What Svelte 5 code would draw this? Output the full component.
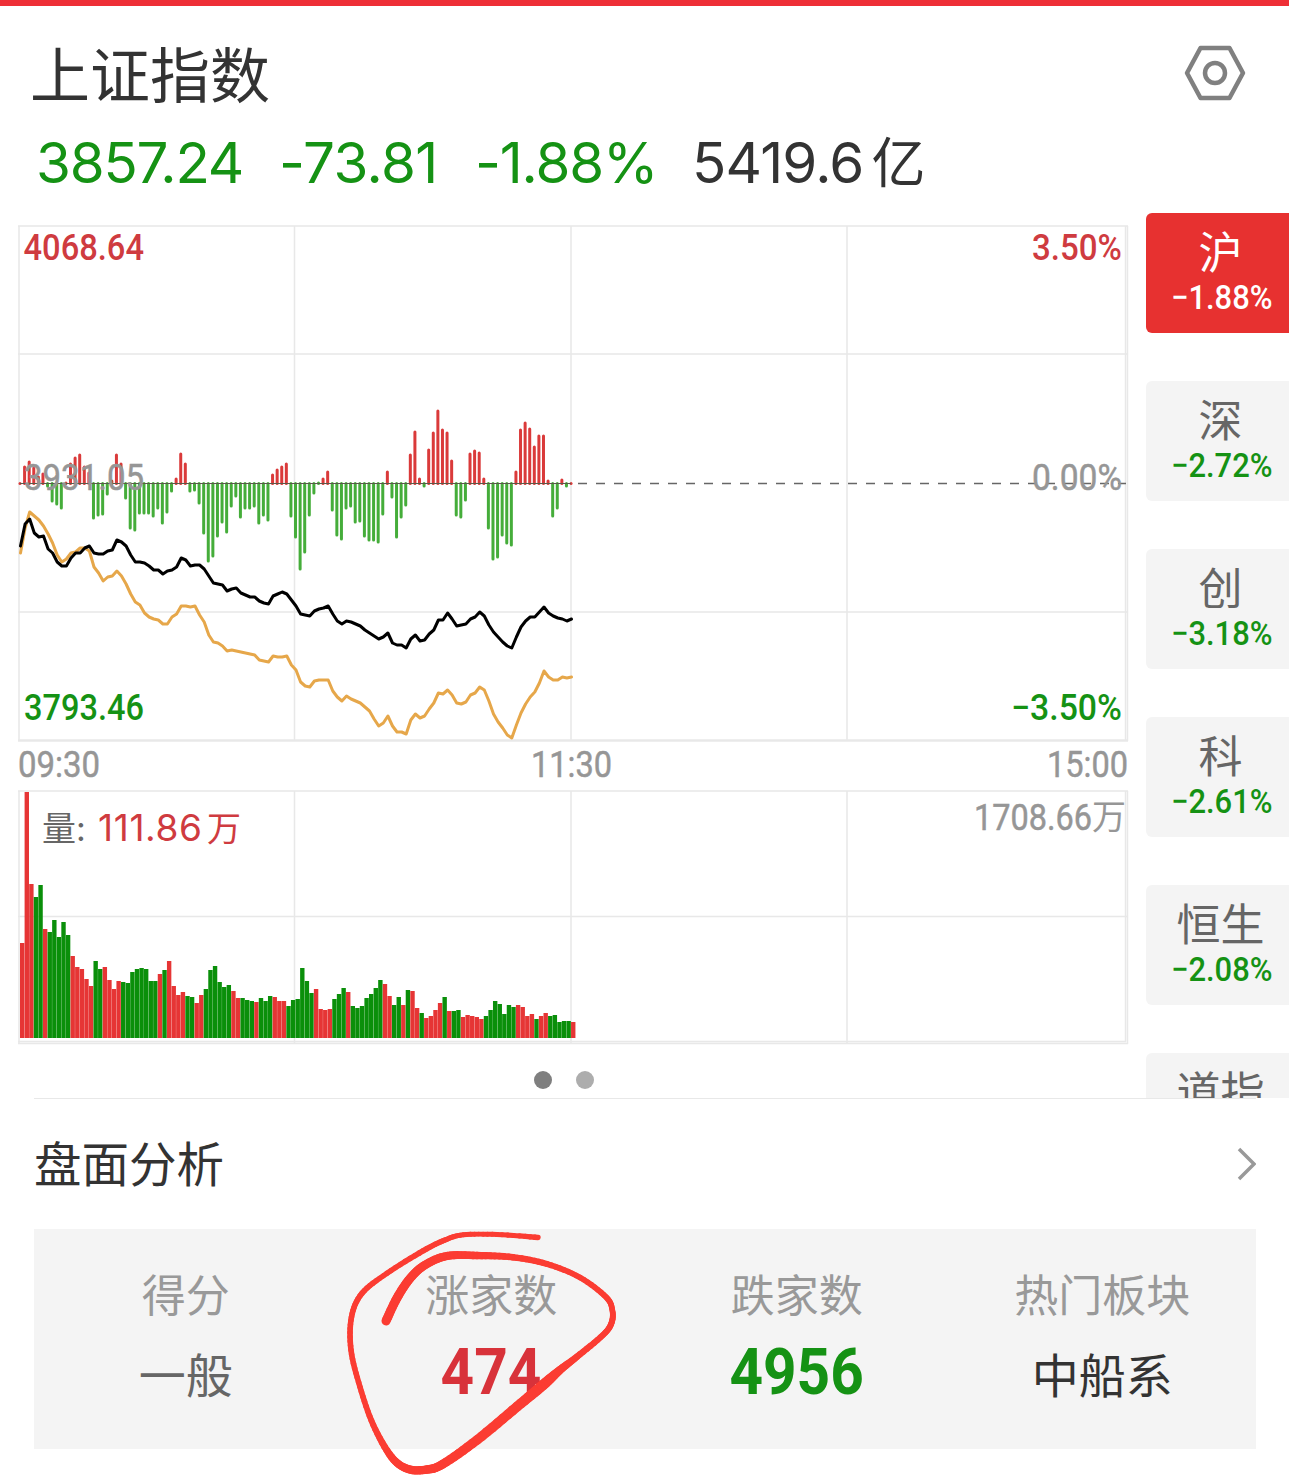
<script lang="ts">
  const STEP = 4.592;

  // Momentum bars: distance from the zero line, positive is up
  const momentum = [
    0, 17, 22, 16, 7, 10, -4, -19, -22, -26, 1, 20, 26, 29, 17, 11, -36, -33, -32, -12,
    3, 29, 20, -16, -46, -48, -31, -31, -31, -34, -26, -41, -30, -9, 5, 30, 20, -9, -8, -21,
    -51, -79, -74, -54, -40, -50, -24, -14, -35, -26, -26, -24, -41, -33, -38, 9, 14, 17, 20, -34,
    -55, -87, -70, -33, -11, -1, 5, 12, -28, -53, -57, -26, -24, -40, -39, -54, -58, -58, -60, -32,
    12, -15, -55, -35, -23, 29, 52, 5, -4, 34, 51, 73, 54, 51, 23, -33, -35, -18, 30, 33,
    31, 5, -46, -77, -75, -53, -61, -63, 12, 54, 61, 55, 37, 48, 48, 3, -34, -26, 4, -4,
    0,
  ];

  const price = [
    546, 524, 519, 533, 537, 536, 549, 553, 562, 566, 566, 558, 553, 553, 548, 546, 553, 554, 554, 551,
    550, 540, 542, 546, 555, 562, 562, 563, 566, 570, 570, 574, 571, 570, 567, 558, 560, 566, 565, 565,
    569, 576, 583, 584, 585, 591, 589, 588, 593, 595, 597, 597, 601, 603, 604, 596, 594, 592, 594, 600,
    606, 614, 615, 616, 611, 609, 608, 606, 614, 621, 624, 621, 622, 624, 626, 630, 633, 636, 639, 637,
    633, 643, 645, 645, 648, 639, 635, 641, 640, 634, 630, 620, 620, 613, 619, 626, 625, 624, 619, 617,
    612, 616, 625, 632, 637, 642, 646, 648, 637, 627, 621, 617, 617, 612, 607, 613, 616, 618, 619, 621,
    619,
  ];

  const average = [
    553, 528, 512, 516, 520, 526, 534, 543, 555, 562, 559, 553, 552, 548, 548, 551, 567, 573, 581, 577,
    576, 571, 576, 584, 594, 602, 605, 613, 617, 619, 620, 624, 624, 617, 614, 606, 606, 607, 606, 615,
    622, 635, 642, 643, 646, 651, 650, 651, 652, 653, 654, 655, 660, 661, 662, 656, 657, 657, 656, 665,
    670, 682, 686, 687, 681, 680, 680, 680, 691, 697, 701, 696, 699, 701, 703, 707, 711, 719, 726, 723,
    716, 726, 732, 732, 734, 720, 714, 718, 716, 709, 703, 693, 694, 690, 695, 703, 704, 702, 695, 693,
    687, 690, 701, 714, 722, 728, 735, 738, 725, 713, 704, 697, 692, 683, 671, 677, 680, 680, 677, 678,
    677,
  ];

  // Volume bars: height, negative marks a falling minute
  const volume = [
    95, 246, 154, -141, -153, 109, -106, -118, -101, -116, -103, 82, 71, 69, 59, 52, -77, -69, 71, 58,
    49, 57, -56, -55, -66, -69, -70, -69, -57, -57, 64, -68, 77, 52, 43, 46, -42, -41, 35, 43,
    -49, -68, -72, -56, -51, -53, 47, 40, -40, -38, -37, 36, -40, -37, -42, 41, 37, 37, -32, -38,
    -39, -70, -57, -45, 49, 29, 28, 29, -39, -44, -50, 46, -32, -30, -32, -40, -44, -50, -58, 54,
    42, -33, -41, 33, -48, 47, 30, -25, 20, 22, 28, 35, -41, 27, -27, -28, 21, 23, 22, 21,
    19, -22, -28, -37, -34, -24, -33, -31, 33, 31, 22, 24, -19, 22, 25, -22, -23, -16, -17, -17,
    16,
  ];

  const markets = [
    { name: "沪", change: "−1.88%" },
    { name: "深", change: "−2.72%" },
    { name: "创", change: "−3.18%" },
    { name: "科", change: "−2.61%" },
    { name: "恒生", change: "−2.08%" },
    { name: "道指", change: "" },
  ];

  const stats = [
    { label: "得分", value: "一般", kind: "plain" },
    { label: "涨家数", value: "474", kind: "up" },
    { label: "跌家数", value: "4956", kind: "down" },
    { label: "热门板块", value: "中船系", kind: "dark" },
  ];

  // Pen stroke: x, y, width
  const pen = [
    [386, 1321, 9], [397, 1298, 9], [410, 1278.5, 8.8], [425, 1265, 8.6], [447, 1256, 8.2],
    [477, 1255.5, 7.5], [513, 1257.3, 6.5], [547, 1264, 6], [580, 1277.5, 5.6], [606, 1297, 5.8],
    [612.3, 1310, 5.6], [611.5, 1323, 6], [603, 1335, 6], [577, 1356.7, 6.5], [560, 1370, 8],
    [543, 1385, 10.4], [517, 1406.7, 10], [477, 1440, 9.6], [443, 1464, 9], [427, 1469.5, 8.4],
    [408, 1469, 8.2], [391.5, 1457, 7.4], [373.3, 1425, 6], [360, 1387, 5.6], [351, 1350, 5.6],
    [351.5, 1317, 5.6], [362, 1293.3, 5.6], [387, 1273.3, 5.4], [423.3, 1250.7, 5.6], [445, 1240, 5.2],
    [463.3, 1234.8, 5], [497, 1234.5, 5], [538, 1237.5, 5.4],
  ];

  function toPoints(values: number[]): string {
    return values.map((y, i) => `${(20.5 + i * STEP).toFixed(1)},${y}`).join(" ");
  }

  function spline(a: number, b: number, c: number, d: number, t: number): number {
    return 0.5 * (2 * b + (c - a) * t + (2 * a - 5 * b + 4 * c - d) * t * t + (3 * b - a - 3 * c + d) * t * t * t);
  }

  function smooth(nodes: number[][]): number[][] {
    const out: number[][] = [];
    for (let i = 0; i < nodes.length - 1; i++) {
      const [a, b, c, d] = [nodes[Math.max(i - 1, 0)], nodes[i], nodes[i + 1], nodes[Math.min(i + 2, nodes.length - 1)]];
      for (let k = 0; k < 8; k++) {
        out.push([0, 1, 2].map((n) => spline(a[n], b[n], c[n], d[n], k / 8)));
      }
    }
    out.push(nodes[nodes.length - 1]);
    return out;
  }

  const stroke = smooth(pen);
</script>

{#snippet din(kind: string, x: number, y: number, width: number, value: string)}
  <text class="din {kind}" {x} {y} textLength={width} lengthAdjust="spacingAndGlyphs">{value}</text>
{/snippet}

<div class="page">
  <header>
    <div class="title-row">
      <h1>上证指数</h1>
      <svg class="settings" width="64" height="58" viewBox="0 0 64 58">
        <path d="M17.5 4H46.5L60 29L46.5 54H17.5L4 29Z" />
        <circle cx="32" cy="29" r="10" />
      </svg>
    </div>
    <div class="quote">
      <span class="q-price">3857.24</span>
      <span class="q-diff">-73.81</span>
      <span class="q-rate">-1.88%</span>
      <span class="q-amount">5419.6<i>亿</i></span>
    </div>
  </header>

  <div class="main">
    <div class="charts">
      <svg width="1146" height="845" viewBox="0 213 1146 845">
        <g class="grid">
          <path d="M18 226H1128M18 354H1127M18 612H1127M19 226V741M294.5 226V741M571 226V741M847 226V741M1125.5 226V741M1127.5 226V741" />
          <path class="edge" d="M18 740.5H1128" />
          <path d="M18 791H1128M18 916.5H1127M18 1041.5H1126M18 1043.5H1128M19 791V1044M294.5 791V1043M571 791V1043M847 791V1043M1125.5 791V1042M1127.5 791V1044" />
        </g>
        <path class="zero" d="M578 483.5H1126" />
        {#each momentum as m, i}
          <line
            class={m >= 0 ? "m-up" : "m-down"}
            x1={20 + i * STEP}
            x2={20 + i * STEP}
            y1={m > 0 ? 483.5 : 483.4}
            y2={m === 0 ? 483.5 : 483 - m + (m > 0 ? 1 : -1)}
          />
        {/each}
        <path class="zero-left" d="M20 483.5H571" />
        <polyline class="average" points={toPoints(average)} />
        <polyline class="price" points={toPoints(price)} />

        {@render din("up", 23.5, 260, 120.5, "4068.64")}
        {@render din("up", 1032, 260, 90, "3.50%")}
        {@render din("gray", 24, 489.5, 120, "3931.05")}
        {@render din("gray", 1032, 489.5, 90, "0.00%")}
        {@render din("down", 24, 719.5, 120, "3793.46")}
        {@render din("down", 1011, 719.5, 111, "−3.50%")}
        {@render din("gray", 18, 776.5, 82, "09:30")}
        {@render din("gray", 531, 776.5, 81, "11:30")}
        {@render din("gray", 1047, 776.5, 81, "15:00")}

        {#each volume as v, i}
          <rect
            class={v > 0 ? "v-up" : "v-down"}
            x={20 + i * STEP}
            y={1038 - Math.abs(v)}
            width={STEP - 0.2}
            height={Math.abs(v)}
          />
        {/each}
        <text class="vol-label" x="42" y="841">量:</text>
        <text class="vol up" x="98" y="840.5" textLength="104">111.86</text>
        <text class="vol-unit up" x="207" y="841">万</text>
        {@render din("gray", 974, 829.5, 118, "1708.66")}
        <text class="vol-unit gray" x="1092" y="829">万</text>
      </svg>
      <div class="dots">
        <b class="on"></b>
        <b></b>
      </div>
    </div>

    <nav>
      {#each markets as market, i}
        <div class="market" class:active={i === 0}>
          <strong>{market.name}</strong>
          <em>{market.change}</em>
        </div>
      {/each}
    </nav>
  </div>

  <section>
    <div class="section-head">
      <h2>盘面分析</h2>
      <svg class="arrow" width="22" height="36" viewBox="0 0 22 36">
        <path d="M5 3L20 18L5 33" />
      </svg>
    </div>
    <div class="stats">
      {#each stats as stat}
        <div class="stat">
          <span class="label">{stat.label}</span>
          <span class="value {stat.kind}">{stat.value}</span>
        </div>
      {/each}
    </div>
  </section>

  <svg class="pen" width="1289" height="1483" viewBox="0 0 1289 1483">
    {#each stroke.slice(1) as p, i}
      <line x1={stroke[i][0]} y1={stroke[i][1]} x2={p[0]} y2={p[1]} stroke-width={p[2]} />
    {/each}
  </svg>
</div>

<style>
  :global(body) {
    margin: 0;
    background: #fff;
  }

  .page {
    position: relative;
    box-sizing: border-box;
    width: 1289px;
    height: 1483px;
    border-top: 6px solid #ee2f36;
    overflow: hidden;
    background: #fff;
    color: #333;
    font-family: Inter, "Noto Sans CJK SC", sans-serif;
  }

  header {
    height: 207px;
  }

  .title-row {
    display: flex;
    justify-content: space-between;
    padding: 38px 42px 0 30px;
    height: 84px;
  }

  h1,
  h2 {
    margin: 0;
    font-weight: 400;
  }

  h1 {
    font-size: 60px;
    line-height: 64px;
  }

  .settings {
    fill: none;
    stroke: #808080;
    stroke-width: 4.5;
    stroke-linejoin: round;
  }

  .quote {
    display: flex;
    padding-left: 36px;
    height: 70px;
    line-height: 70px;
    font-size: 56.5px;
    letter-spacing: -1px;
    white-space: nowrap;
    color: #159214;
  }

  .q-price {
    width: 243px;
    letter-spacing: -1.2px;
  }

  .q-diff {
    width: 196px;
    letter-spacing: -0.6px;
  }

  .q-rate {
    width: 217px;
    letter-spacing: -1.2px;
  }

  .q-amount {
    color: #333;
    letter-spacing: -0.8px;
  }

  .q-amount i {
    font-style: normal;
    font-size: 54px;
    margin-left: 8px;
  }

  .main {
    display: flex;
    height: 885px;
    overflow: hidden;
  }

  .charts {
    width: 1146px;
  }

  .charts svg {
    display: block;
  }

  .grid {
    fill: none;
    stroke: #e8e8e8;
    stroke-width: 1.5;
  }

  .grid .edge {
    stroke-width: 2.5;
  }

  .zero {
    stroke: #666;
    stroke-width: 1.3;
    stroke-dasharray: 9 9;
  }

  .zero-left {
    stroke: #5a5a4a;
    stroke-width: 1;
  }

  .m-up,
  .m-down {
    stroke-width: 3;
    stroke-linecap: round;
  }

  .m-up {
    stroke: #da3a3a;
  }

  .m-down {
    stroke: #45ad3a;
  }

  .price,
  .average {
    fill: none;
    stroke-width: 3;
    stroke-linejoin: round;
    stroke-linecap: round;
  }

  .price {
    stroke: #000;
  }

  .average {
    stroke: #e6a74a;
  }

  .v-up {
    fill: #e63535;
  }

  .v-down {
    fill: #0a8f0a;
  }

  .din {
    font-family: Roboto, sans-serif;
    font-size: 36px;
    font-weight: 500;
  }

  .up {
    fill: #cf3b40;
  }

  .down {
    fill: #159214;
  }

  .gray {
    fill: #969696;
  }

  .din.gray {
    font-weight: 400;
    stroke: #969696;
    stroke-width: 0.5;
  }

  .vol {
    font-size: 37px;
  }

  .vol-label {
    fill: #666;
    font-size: 34px;
  }

  .vol-unit {
    font-size: 34px;
  }

  .dots {
    display: flex;
    gap: 24px;
    padding: 13px 0 0 534px;
  }

  .dots b {
    width: 18px;
    height: 18px;
    border-radius: 50%;
    background: #adadad;
  }

  .dots .on {
    background: #7f7f7f;
  }

  nav {
    display: flex;
    flex: 1;
    flex-direction: column;
    gap: 48px;
  }

  .market {
    box-sizing: border-box;
    display: flex;
    flex: none;
    flex-direction: column;
    align-items: center;
    width: 149px;
    height: 120px;
    padding-top: 17px;
    border-radius: 6px;
    background: #f4f4f4;
    color: #666;
  }

  .market strong {
    font-size: 44px;
    font-weight: 400;
    line-height: 46px;
  }

  .market em {
    font-family: Roboto, sans-serif;
    font-size: 34px;
    font-style: normal;
    font-weight: 500;
    line-height: 42px;
    white-space: nowrap;
    color: #159214;
    transform: translateX(1px) scaleX(0.91);
  }

  .market.active,
  .market.active em {
    color: #fff;
  }

  .market.active {
    background: #e73130;
  }

  section {
    margin: 0 33px 0 34px;
    border-top: 1px solid #e8e8e8;
  }

  .section-head {
    display: flex;
    align-items: center;
    justify-content: space-between;
    height: 130px;
  }

  h2 {
    padding-bottom: 6px;
    font-size: 47.5px;
  }

  .arrow {
    fill: none;
    stroke: #999;
    stroke-width: 3.5;
  }

  .stats {
    display: flex;
    height: 220px;
    background: #f4f4f4;
  }

  .stat {
    display: flex;
    flex: 1;
    flex-direction: column;
    align-items: center;
    padding: 37px 2px 0 0;
  }

  .label {
    font-size: 44px;
    line-height: 60px;
    color: #999;
  }

  .value {
    margin-top: 20px;
    font-size: 47px;
    line-height: 60px;
    color: #666;
  }

  .value.dark {
    color: #333;
  }

  .value.up,
  .value.down {
    margin-top: 16px;
    font-family: Roboto, sans-serif;
    font-size: 65px;
    font-weight: 700;
    transform: scaleX(0.9);
  }

  .value.up {
    color: #d8323a;
  }

  .value.down {
    color: #159214;
  }

  .pen {
    position: absolute;
    top: -6px;
    left: 0;
    fill: none;
    stroke: #fb3c32;
    stroke-linecap: round;
    pointer-events: none;
  }
</style>
